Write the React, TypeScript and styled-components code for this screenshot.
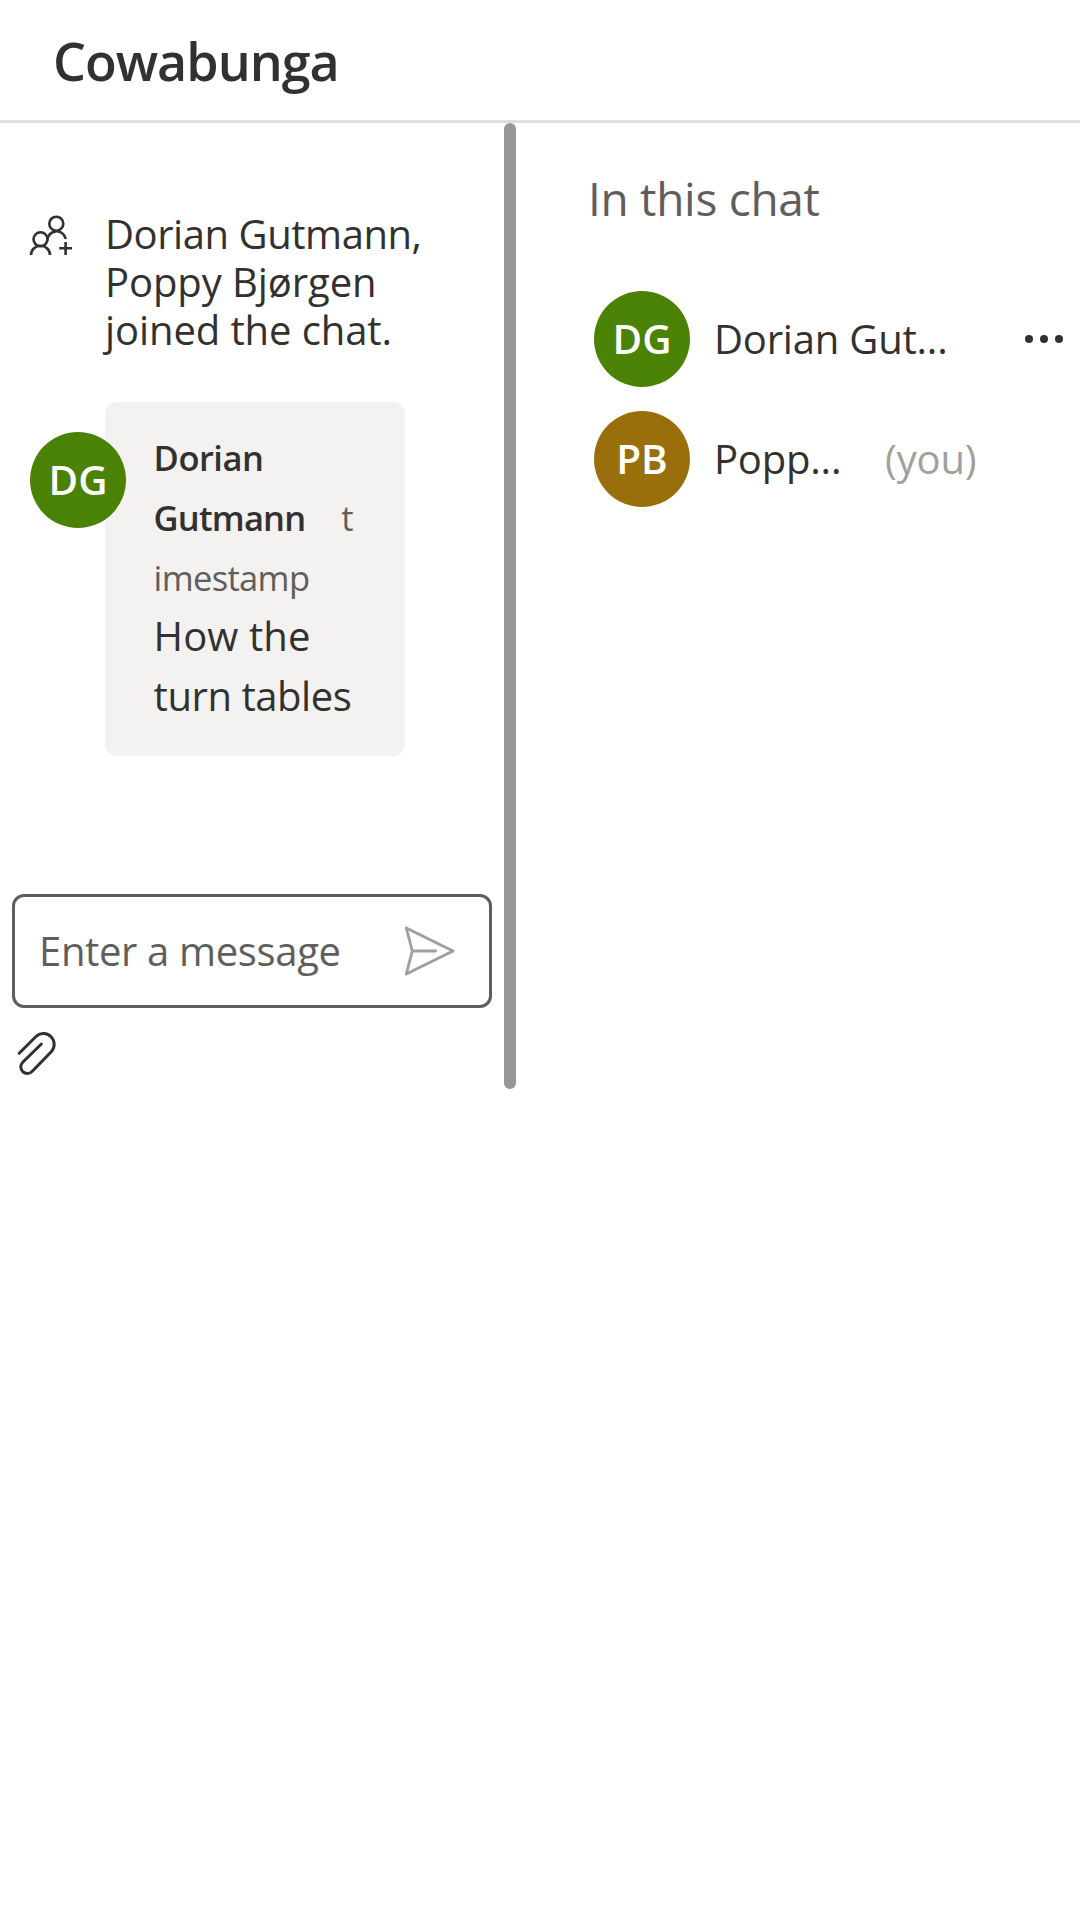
import React from "react";
import styled, { createGlobalStyle } from "styled-components";

const GlobalStyle = createGlobalStyle`
  * { box-sizing: border-box; }
  body {
    margin: 0;
    background: #ffffff;
    color: #323130;
    font-family: "Open Sans", "Noto Sans", sans-serif;
  }
`;

const Page = styled.div`
  display: flex;
  flex-direction: column;
  width: 1080px;
  min-height: 1920px;
`;

const Header = styled.header`
  display: flex;
  height: 123px;
  padding: 20px 53px 0;
  border-bottom: 3px solid #dddddd;
`;

const Title = styled.h1`
  margin: 0;
  font-size: 52px;
  font-weight: 600;
  line-height: 81px;
  letter-spacing: -1px;
`;

const Body = styled.main`
  display: flex;
  height: 966px;
`;

const ChatPane = styled.section`
  display: flex;
  flex-direction: column;
  width: 504px;
`;

const Divider = styled.div`
  width: 12px;
  border-radius: 6px;
  background: #979797;
`;

const SystemMessage = styled.div`
  display: flex;
  padding: 86.5px 60px 0 28px;
`;

const IconSlot = styled.span`
  display: flex;
  flex: none;
  width: 77px;
  padding-top: 4.5px;
`;

const SystemText = styled.div`
  display: flex;
  flex-direction: column;
  font-size: 40px;
  line-height: 48px;
  white-space: nowrap;
`;

const Tracked = styled.span<{ $track: number }>`
  letter-spacing: ${(p) => p.$track}px;
`;

const MessageRow = styled.div`
  display: flex;
  padding: 48.5px 0 0 30px;
`;

const Avatar = styled.div<{ $color: string }>`
  display: flex;
  flex: none;
  align-items: center;
  justify-content: center;
  width: 96px;
  height: 96px;
  padding-bottom: 1px;
  border-radius: 50%;
  background: ${(p) => p.$color};
  color: #ffffff;
  font-size: 40.4px;
  font-weight: 600;
  line-height: 55px;
`;

const MessageAvatar = styled(Avatar)`
  z-index: 1;
  margin: 30px -21px 0 0;
`;

const Bubble = styled.article`
  width: 300px;
  height: 354px;
  padding: 25.5px 44px 0 48.6px;
  border-radius: 12px;
  background: #f3f2f1;
  line-height: 60px;
`;

const Meta = styled.div`
  height: 178px;
  font-size: 34.5px;
`;

const Author = styled.span`
  font-weight: 600;
`;

const Timestamp = styled.span`
  margin-left: 36px;
  color: #605e5c;
  letter-spacing: -0.65px;
  word-break: break-all;
`;

const Content = styled.div`
  font-size: 40px;
`;

const SendBox = styled.div`
  display: flex;
  align-items: center;
  justify-content: space-between;
  height: 114px;
  margin: 138px 12px 0;
  padding: 0 32px 0 24px;
  border: 3px solid #605e5c;
  border-radius: 12px;
`;

const Placeholder = styled.span`
  margin-bottom: 1px;
  color: #605e5c;
  font-size: 40px;
  line-height: 55px;
  letter-spacing: -0.35px;
`;

const AttachRow = styled.div`
  display: flex;
  padding: 20px 0 0 14px;
`;

const PeoplePane = styled.aside`
  display: flex;
  flex: 1;
  flex-direction: column;
  padding: 42px 15px 0 72px;
`;

const PaneTitle = styled.h2`
  margin: 0;
  color: #605e5c;
  font-size: 46px;
  font-weight: 400;
  line-height: 66px;
  letter-spacing: -0.3px;
`;

const PeopleList = styled.div`
  display: flex;
  flex-direction: column;
  gap: 24px;
  padding: 60px 0 0 6px;
`;

const Person = styled.div`
  display: flex;
  align-items: center;
  height: 96px;
`;

const PersonName = styled.span<{ $width: number }>`
  width: ${(p) => p.$width}px;
  margin: 0 0 1px 24px;
  font-size: 40px;
  line-height: 55px;
  letter-spacing: -0.2px;
  white-space: nowrap;
`;

const You = styled.span`
  margin-bottom: 1px;
  color: #a19f9d;
  font-size: 40px;
  line-height: 55px;
  letter-spacing: -0.15px;
`;

const Dots = styled.svg`
  margin-left: auto;
`;

const Stroke = styled.svg<{ $color: string }>`
  display: block;
  fill: none;
  stroke: ${(p) => p.$color};
`;

function PeopleAddIcon() {
  return (
    <Stroke $color="#323130" width="48" height="42" viewBox="28 214 48 42" strokeWidth="2.6">
      <circle cx="56.3" cy="223.7" r="7" />
      <circle cx="40.5" cy="239.3" r="7" />
      <path d="M31 255A9.5 9.2 0 0 1 50 255" />
      <path d="M47.2 240.5A9.4 9.6 0 0 1 65.8 239" />
      <path d="M59.2 248.3H72M65.6 242v13" />
    </Stroke>
  );
}

function SendIcon() {
  return (
    <Stroke
      $color="#a19f9d"
      width="54"
      height="54"
      viewBox="403 924 54 54"
      strokeWidth="2.9"
      strokeLinejoin="round"
      strokeLinecap="round"
    >
      <path d="M406.3 928 453 951 406.3 974 412.3 951ZM412.3 951H435.6" />
    </Stroke>
  );
}

function AttachIcon() {
  return (
    <Stroke
      $color="#323130"
      width="45"
      height="50"
      viewBox="13.6 1028 45 50"
      strokeWidth="3"
      strokeLinecap="round"
    >
      <path d="M18.8 1053.3 36.1 1036A10.8 10.8 0 0 1 51.3 1051.2L31.7 1071.5A6.5 6.5 0 0 1 22.3 1062.3L41 1044" />
    </Stroke>
  );
}

export default function App() {
  return (
    <Page>
      <GlobalStyle />
      <Header>
        <Title>Cowabunga</Title>
      </Header>
      <Body>
        <ChatPane>
          <SystemMessage>
            <IconSlot>
              <PeopleAddIcon />
            </IconSlot>
            <SystemText>
              <Tracked $track={-0.45}>Dorian Gutmann,</Tracked>
              <Tracked $track={-0.08}>Poppy Bjørgen</Tracked>
              <Tracked $track={-0.1}>joined the chat.</Tracked>
            </SystemText>
          </SystemMessage>
          <MessageRow>
            <MessageAvatar $color="#498205">DG</MessageAvatar>
            <Bubble>
              <Meta>
                <Author>
                  <Tracked $track={-0.5}>Dorian</Tracked> <Tracked $track={-0.8}>Gutmann</Tracked>
                </Author>
                <Timestamp>timestamp</Timestamp>
              </Meta>
              <Content>
                <Tracked $track={0.1}>How the</Tracked> <Tracked $track={-0.45}>turn tables</Tracked>
              </Content>
            </Bubble>
          </MessageRow>
          <SendBox>
            <Placeholder>Enter a message</Placeholder>
            <SendIcon />
          </SendBox>
          <AttachRow>
            <AttachIcon />
          </AttachRow>
        </ChatPane>
        <Divider />
        <PeoplePane>
          <PaneTitle>In this chat</PaneTitle>
          <PeopleList>
            <Person>
              <Avatar $color="#498205">DG</Avatar>
              <PersonName $width={240}>Dorian Gut...</PersonName>
              <Dots width="42" height="12" viewBox="1023 333 42 12" fill="#323130">
                <circle cx="1029" cy="339" r="4" />
                <circle cx="1044" cy="339" r="4" />
                <circle cx="1059" cy="339" r="4" />
              </Dots>
            </Person>
            <Person>
              <Avatar $color="#986f0b">PB</Avatar>
              <PersonName $width={171}>Popp...</PersonName>
              <You>(you)</You>
            </Person>
          </PeopleList>
        </PeoplePane>
      </Body>
    </Page>
  );
}
